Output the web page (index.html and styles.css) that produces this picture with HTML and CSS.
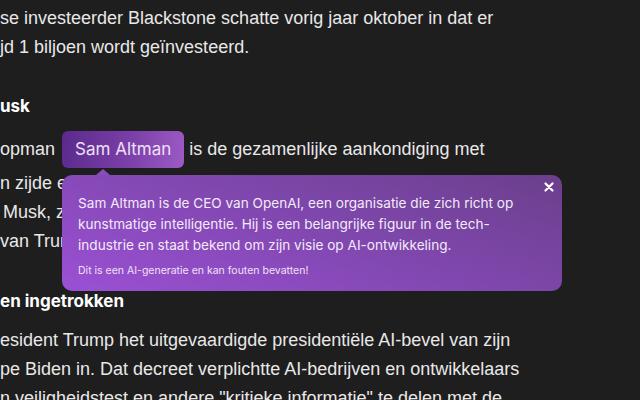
FILE: index.html
```html
<!DOCTYPE html>
<html lang="nl">
<head>
<meta charset="utf-8">
<title>Artikel</title>
<link rel="stylesheet" href="styles.css">
</head>
<body>
<div class="page">
  <article class="article">
    <p class="para first">
      <span class="line">se investeerder Blackstone schatte vorig jaar oktober in dat er</span>
      <span class="line">jd 1 biljoen wordt geïnvesteerd.</span>
    </p>
    <h2 class="heading">usk</h2>
    <p class="para">
      <span class="line pill-line">opman <span class="entity"><span class="pill">Sam Altman</span>
        <span class="tooltip">
          <span class="arrow"></span>
          <button class="close" aria-label="Sluiten"><svg width="10" height="10" viewBox="0 0 10 10"><path d="M1.5 1.5 L8.5 8.5 M8.5 1.5 L1.5 8.5" stroke="#ffffff" stroke-width="2.2" stroke-linecap="round"/></svg></button>
          <span class="tip-text">Sam Altman is de CEO van OpenAI, een organisatie die zich richt op kunstmatige intelligentie. Hij is een belangrijke figuur in de tech-industrie en staat bekend om zijn visie op AI-ontwikkeling.</span>
          <span class="tip-note">Dit is een AI-generatie en kan fouten bevatten!</span>
        </span></span> is de gezamenlijke aankondiging met</span>
      <span class="line">n zijde een</span>
      <span class="line indent">Musk, zei</span>
      <span class="line">van Trump</span>
    </p>
    <h2 class="heading second">en ingetrokken</h2>
    <p class="para">
      <span class="line">esident Trump het uitgevaardigde presidentiële AI-bevel van zijn</span>
      <span class="line">pe Biden in. Dat decreet verplichtte AI-bedrijven en ontwikkelaars</span>
      <span class="line">n veiligheidstest en andere "kritieke informatie" te delen met de</span>
    </p>
  </article>
</div>
</body>
</html>
```

FILE: styles.css
```css
* { box-sizing: border-box; }
html, body {
  margin: 0;
  padding: 0;
  background: #1e1e1e;
}
.page {
  width: 640px;
  height: 400px;
  overflow: hidden;
  background: #1e1e1e;
}
.article {
  padding-top: 4px;
  color: #e8e8e8;
  font-family: "Liberation Sans", Arial, sans-serif;
  font-size: 18px;
}
.para {
  margin: 0;
}
.line {
  display: block;
  white-space: nowrap;
  line-height: 29px;
  height: 29px;
}
.line.indent { padding-left: 3px; }
.pill-line {
  height: 38px;
  line-height: 37px;
}
.heading {
  margin: 32px 0 13px;
  font-family: Inter, "Liberation Sans", sans-serif;
  font-weight: 700;
  font-size: 17px;
  line-height: 24px;
  color: #ffffff;
}
.heading.second {
  margin-top: 33px;
}
.entity {
  position: relative;
  display: inline-block;
  vertical-align: top;
  margin-left: 2px;
}
.pill {
  display: inline-block;
  height: 37px;
  padding: 0 13px;
  border-radius: 6px;
  background: linear-gradient(100deg, #5a2a8b 0%, #7a3fa8 55%, #9d5bc4 100%);
  color: #eee0f7;
  font-family: Inter, sans-serif;
  font-size: 17px;
  line-height: 37px;
}
.tooltip {
  position: absolute;
  left: 0;
  top: 44px;
  width: 500px;
  padding: 18px 30px 13px 16px;
  border-radius: 10px;
  background: linear-gradient(200deg, #6b3f8b 0%, #7f47ad 45%, #9b50d4 100%);
  color: #f3eafa;
  font-family: Inter, sans-serif;
  white-space: normal;
  display: block;
  z-index: 2;
}
.arrow {
  position: absolute;
  left: 34px;
  top: -6px;
  width: 0;
  height: 0;
  border-left: 7px solid transparent;
  border-right: 7px solid transparent;
  border-bottom: 6px solid #8a4cbb;
}
.close {
  position: absolute;
  right: 6px;
  top: 5px;
  width: 14px;
  height: 14px;
  padding: 2px;
  border: 0;
  background: transparent;
  display: flex;
  align-items: center;
  justify-content: center;
}
.tip-text {
  display: block;
  font-size: 13.6px;
  line-height: 21px;
}
.tip-note {
  display: block;
  margin-top: 8px;
  font-size: 10.5px;
  line-height: 14px;
  color: #efe2f8;
}
```
